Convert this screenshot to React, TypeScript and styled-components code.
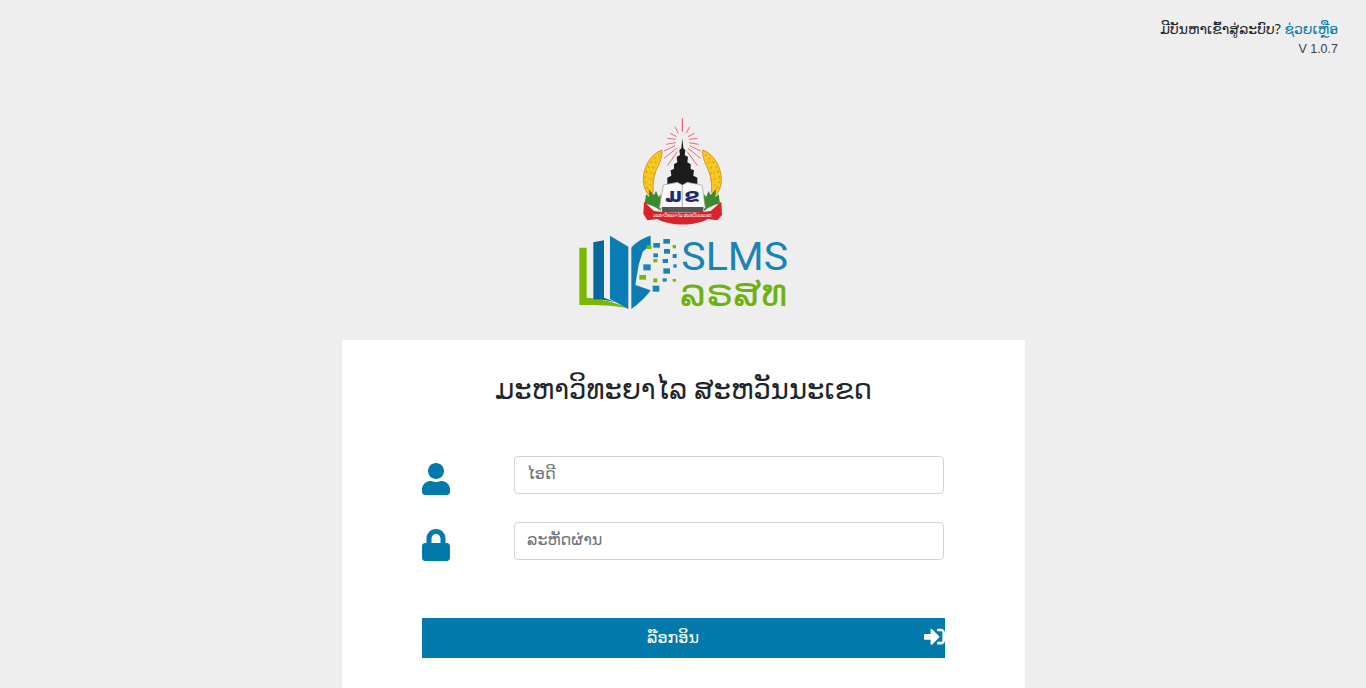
import { createGlobalStyle, styled } from 'styled-components'
import { FaLock, FaSignInAlt, FaUser } from 'react-icons/fa'

const GlobalStyle = createGlobalStyle`
  html, body {
    margin: 0;
    height: 100%;
    overflow: hidden;
    background: #eeeeee;
    font-family: "Noto Sans", "DejaVu Sans", sans-serif;
  }
`

const Page = styled.div`
  height: 688px;
  display: flex;
  flex-direction: column;
  overflow: hidden;
`

const TopBar = styled.header`
  height: 105px;
  flex: none;
  box-sizing: border-box;
  padding: 18px 28px 0 0;
  text-align: right;
  color: #212529;
`

const HelpLine = styled.div`
  font-size: 14px;
  line-height: 21px;
`

const HelpLink = styled.a`
  color: #047aac;
  text-decoration: none;
`

const Version = styled.div`
  font-family: "Liberation Sans", sans-serif;
  font-size: 12.5px;
  line-height: 20px;
  color: #3a3f47;
`

const LogoArea = styled.div`
  height: 235px;
  flex: none;
  display: flex;
  justify-content: center;
  align-items: flex-start;
`

const Card = styled.main`
  width: 683px;
  flex: 1;
  margin-left: 342px;
  box-sizing: border-box;
  background: #ffffff;
  padding: 29px 80px 0;
`

const Title = styled.h1`
  margin: 0 0 47px;
  font-size: 27.5px;
  line-height: 40px;
  font-weight: 400;
  text-align: center;
  color: #212529;
`

const Field = styled.div`
  display: flex;
  align-items: center;
  height: 38px;
  margin-bottom: 28px;
  color: #047aac;

  svg {
    width: 28px;
    height: 32px;
    margin: 7px 64px 0 0;
  }
`

const Input = styled.input`
  width: 430px;
  height: 38px;
  box-sizing: border-box;
  padding: 0 12px 4px;
  border: 1px solid #ced4da;
  border-radius: 4px;
  font: inherit;
  font-size: 16px;

  &::placeholder {
    color: #6c757d;
  }
`

const Submit = styled.button`
  display: flex;
  align-items: center;
  width: 523px;
  height: 40px;
  margin-top: 58px;
  padding: 0 0 3px;
  border: 0;
  background: #047aac;
  color: #ffffff;
  font: inherit;
  font-size: 16px;
  overflow: hidden;

  span {
    flex: 1;
    text-align: center;
  }

  svg {
    width: 21px;
    height: 21px;
    flex: none;
  }
`

const rays = [
  [345, 65, 355, 85],
  [330, 85, 350, 95],
  [322, 100, 347, 103],
  [318, 118, 347, 113],
  [312, 138, 345, 122],
  [312, 160, 350, 130],
  [322, 182, 352, 140],
]

const grains = [
  [296, 150], [284, 160], [274, 172], [266, 186], [260, 200], [256, 216], [257, 232], [262, 248],
  [288, 172], [280, 188], [272, 204], [270, 222], [270, 240], [282, 206], [280, 226],
]

const pixels = [
  [280, 414, 20, 14, '#1a84b8'], [310, 402, 20, 14, '#1a84b8'], [260, 420, 14, 12, '#7ab800'],
  [312, 432, 18, 14, '#1a84b8'], [338, 420, 10, 10, '#7ab800'], [280, 445, 14, 12, '#1a84b8'],
  [338, 447, 12, 12, '#1a84b8'], [308, 462, 16, 12, '#1a84b8'], [280, 462, 12, 10, '#7ab800'],
  [250, 478, 22, 18, '#1a84b8'], [310, 490, 20, 16, '#1a84b8'], [340, 478, 10, 10, '#1a84b8'],
  [238, 510, 20, 14, '#7ab800'], [280, 520, 12, 12, '#7ab800'], [308, 520, 12, 10, '#1a84b8'],
  [338, 522, 10, 8, '#7ab800'], [278, 542, 20, 18, '#1a84b8'],
]

function LogoArt() {
  return (
    <svg width="250" height="220" viewBox="-6 0 750 660" aria-label="SLMS">
      {/* emblem */}
      <line x1="367" y1="40" x2="367" y2="80" stroke="#ef4056" strokeWidth="3" />
      {rays.map(([x1, y1, x2, y2]) => (
        <g key={`${x1}-${y1}`} stroke="#f06a78" strokeWidth="3">
          <line x1={x1} y1={y1} x2={x2} y2={y2} />
          <line x1={734 - x1} y1={y1} x2={734 - x2} y2={y2} />
        </g>
      ))}
      {[0, 1].map((side) => (
        <g key={side} transform={side ? 'matrix(-1 0 0 1 734 0)' : undefined}>
          <path d="M306 135C272 146 248 188 250 228C251 246 256 258 266 270L280 262C278 240 280 218 288 198C296 178 308 160 306 135Z" fill="#f7c81e" stroke="#c9741a" strokeWidth="2" />
          {grains.map(([x, y]) => (
            <circle key={`${x}-${y}`} cx={x} cy={y} r="2.5" fill="#e0900f" />
          ))}
          <path d="M254 296L258 268L268 276L266 252L282 270L288 258L296 276L302 268V318C286 304 270 298 254 296Z" fill="#3c8a2e" />
        </g>
      ))}
      <path d="M367 100L370 130L376 136L374 150L384 156L382 172L392 178L392 192L402 196L400 212L412 218L412 240L322 240L322 218L334 212L332 196L342 192L342 178L352 172L350 156L360 150L358 136L364 130Z" fill="#1c1c1c" />
      <path d="M310 240L352 232L367 240L382 232L426 240L436 310L298 310Z" fill="#f8f8f8" stroke="#9a9a9a" strokeWidth="2" />
      <line x1="367" y1="240" x2="367" y2="316" stroke="#8c8c8c" strokeWidth="2" />
      <path d="M306 306H430V322H306Z" fill="#555555" />
      <text x="341" y="290" textAnchor="middle" fontFamily="DejaVu Sans" fontWeight="700" fontSize="60" fill="#1f2a6b">ມ</text>
      <text x="396" y="290" textAnchor="middle" fontFamily="DejaVu Sans" fontWeight="700" fontSize="60" fill="#1f2a6b">ຂ</text>
      <path d="M252 290L282 318C330 324 405 324 452 318L484 290L486 330L472 346L444 342C405 364 330 364 292 342L262 346L250 326Z" fill="#d8232a" />
      <text x="367" y="336" textAnchor="middle" fontFamily="DejaVu Sans" fontSize="15" fill="#ffffff" textLength="176" lengthAdjust="spacingAndGlyphs">ມະຫາວິທະຍາໄລ ສະຫວັນນະເຂດ</text>

      {/* book */}
      <path d="M58 428H80V578C120 582 165 590 205 610C160 600 110 600 58 600Z" fill="#7ab800" />
      <path d="M100 412L132 406V578L168 592C145 586 122 584 100 583Z" fill="#04689a" />
      <path d="M150 392L205 425V612L150 582Z" fill="#0a7db5" />
      <path d="M214 428C226 412 250 398 272 392V420L248 440L236 480L226 540L272 556C255 580 232 600 214 612Z" fill="#0a7db5" />
      {pixels.map(([x, y, w, h, fill]) => (
        <rect key={`${x}-${y}`} x={x} y={y} width={w} height={h} fill={fill} />
      ))}

      {/* wordmark */}
      <text x="364" y="495" fontFamily="Roboto" fontWeight="400" fontSize="118" fill="#1a84b8" textLength="320" lengthAdjust="spacingAndGlyphs">SLMS</text>
      <text x="360" y="604" fontFamily="DejaVu Sans" fontSize="118" fill="#6fb10e" textLength="322" lengthAdjust="spacingAndGlyphs">ລຣສທ</text>
    </svg>
  )
}

export default function App() {
  return (
    <Page>
      <GlobalStyle />
      <TopBar>
        <HelpLine>
          ມີບັນຫາເຂົ້າສູ່ລະບົບ? <HelpLink href="#">ຊ່ວຍເຫຼືອ</HelpLink>
        </HelpLine>
        <Version>V 1.0.7</Version>
      </TopBar>
      <LogoArea>
        <LogoArt />
      </LogoArea>
      <Card>
        <Title>ມະຫາວິທະຍາໄລ ສະຫວັນນະເຂດ</Title>
        <Field>
          <FaUser />
          <Input placeholder="ໄອດີ" />
        </Field>
        <Field>
          <FaLock />
          <Input type="password" placeholder="ລະຫັດຜ່ານ" />
        </Field>
        <Submit>
          <span>ລ໊ອກອິນ</span>
          <FaSignInAlt />
        </Submit>
      </Card>
    </Page>
  )
}
